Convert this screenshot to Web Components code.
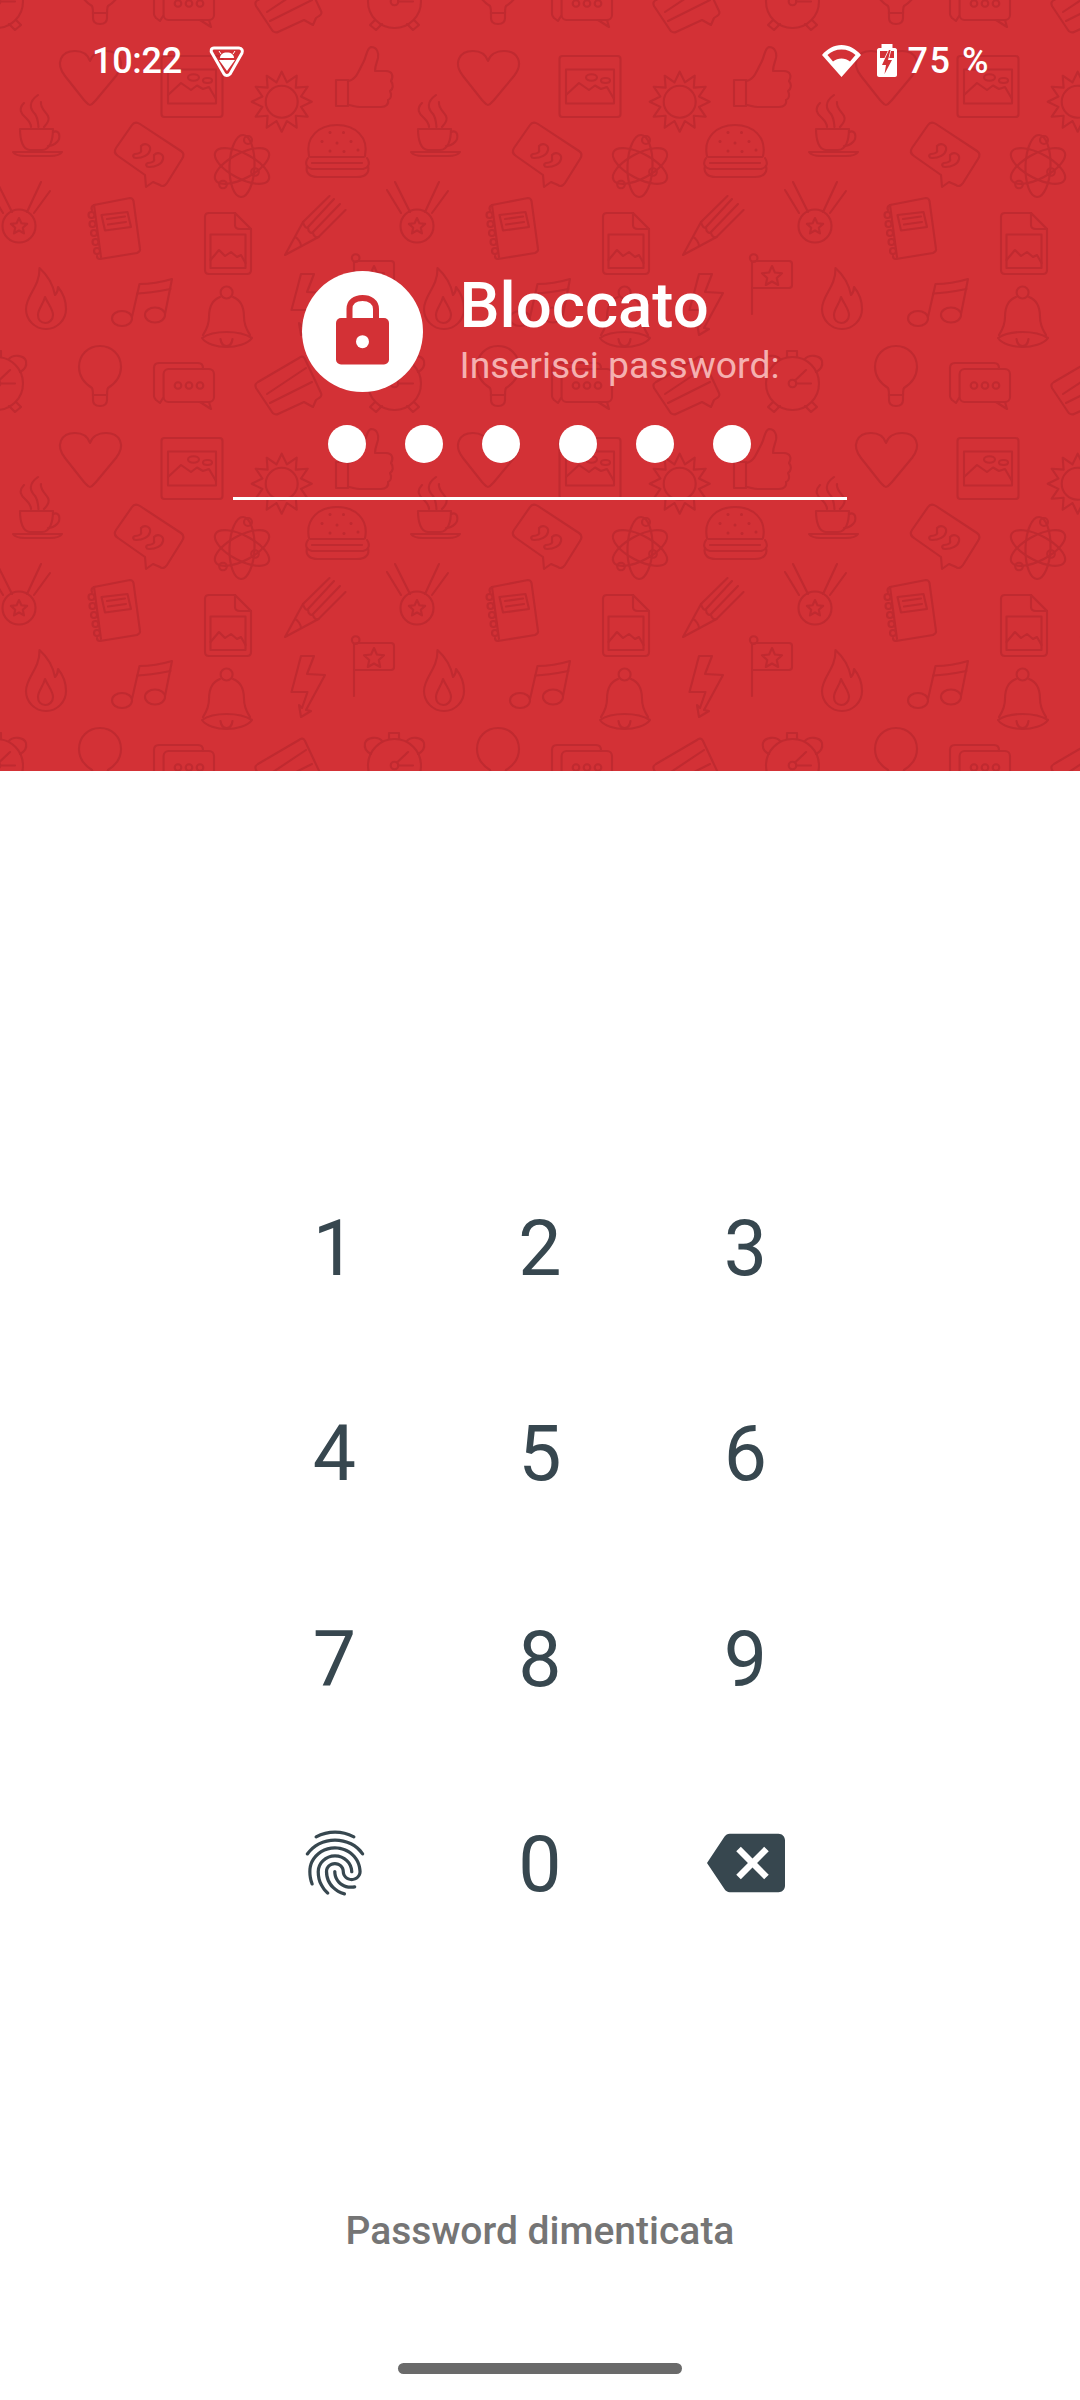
<!DOCTYPE html>
<html lang="it">
<head>
<meta charset="utf-8">
<title>Bloccato</title>
<style>
html, body {
    margin: 0;
    background: white;
}
body {
    width: 1080px;
    height: 2400px;
    overflow: hidden;
    font-family: Roboto, "Noto Sans", sans-serif;
}
</style>
</head>
<body>
<lock-header>
    <span slot="time">10:22</span>
    <span slot="battery">75 %</span>
    <span slot="title">Bloccato</span>
    <span slot="subtitle">Inserisci password:</span>
</lock-header>
<pin-pad>
    <pin-key>1</pin-key><pin-key>2</pin-key><pin-key>3</pin-key>
    <pin-key>4</pin-key><pin-key>5</pin-key><pin-key>6</pin-key>
    <pin-key>7</pin-key><pin-key>8</pin-key><pin-key>9</pin-key>
    <pin-key>
        <svg width="78" height="78" viewBox="0 0 24 24" fill="#37474f"><path d="M17.81 4.47c-.08 0-.16-.02-.23-.06C15.66 3.42 14 3 12.01 3c-1.98 0-3.86.47-5.57 1.41-.24.13-.54.04-.68-.2-.13-.24-.04-.55.2-.68C7.82 2.52 9.86 2 12.01 2c2.13 0 3.99.47 6.03 1.52.25.13.34.43.21.67-.09.18-.26.28-.44.28zM3.5 9.72c-.1 0-.2-.03-.29-.09-.23-.16-.28-.47-.12-.7.99-1.4 2.25-2.5 3.75-3.27C9.98 4.04 14 4.03 17.15 5.65c1.5.77 2.76 1.86 3.75 3.25.16.22.11.54-.12.7-.23.16-.54.11-.7-.12-.9-1.26-2.04-2.25-3.39-2.94-2.87-1.47-6.54-1.47-9.4.01-1.36.7-2.5 1.7-3.4 2.96-.08.14-.23.21-.39.21zm6.25 12.07c-.13 0-.26-.05-.35-.15-.87-.87-1.34-1.43-2.01-2.64-.69-1.23-1.05-2.73-1.05-4.34 0-2.97 2.54-5.39 5.66-5.39s5.66 2.42 5.66 5.39c0 .28-.22.5-.5.5s-.5-.22-.5-.5c0-2.42-2.09-4.39-4.66-4.39-2.57 0-4.66 1.97-4.66 4.39 0 1.44.32 2.77.93 3.85.64 1.15 1.08 1.64 1.85 2.42.19.2.19.51 0 .71-.11.1-.24.15-.37.15zm7.17-1.85c-1.19 0-2.24-.3-3.1-.89-1.49-1.01-2.38-2.65-2.38-4.39 0-.28.22-.5.5-.5s.5.22.5.5c0 1.41.72 2.74 1.94 3.56.71.48 1.54.71 2.54.71.24 0 .64-.03 1.04-.1.27-.05.53.13.58.41.05.27-.13.53-.41.58-.57.11-1.07.12-1.21.12zM14.91 22c-.04 0-.09-.01-.13-.02-1.59-.44-2.63-1.03-3.72-2.1-1.4-1.39-2.17-3.24-2.17-5.22 0-1.62 1.38-2.94 3.08-2.94 1.7 0 3.08 1.32 3.08 2.94 0 1.07.93 1.94 2.08 1.94s2.08-.87 2.08-1.94c0-3.77-3.25-6.83-7.25-6.83-2.84 0-5.44 1.58-6.61 4.03-.39.81-.59 1.76-.59 2.8 0 .78.07 2.01.67 3.61.1.26-.03.55-.29.64-.26.1-.55-.04-.64-.29-.49-1.31-.73-2.61-.73-3.96 0-1.2.23-2.29.68-3.24 1.33-2.79 4.28-4.6 7.51-4.6 4.55 0 8.25 3.51 8.25 7.83 0 1.62-1.38 2.94-3.08 2.94s-3.08-1.32-3.08-2.94c0-1.07-.93-1.94-2.08-1.94s-2.08.87-2.08 1.94c0 1.71.66 3.31 1.87 4.51.95.94 1.86 1.46 3.27 1.85.27.07.42.35.35.61-.05.23-.26.38-.47.38z"/></svg>
    </pin-key>
    <pin-key>0</pin-key>
    <pin-key>
        <svg width="78" height="78" viewBox="0 0 24 24" fill="#37474f"><path d="M22 3H7c-.69 0-1.23.35-1.59.88L0 12l5.41 8.11c.36.53.9.89 1.59.89h15c1.1 0 2-.9 2-2V5c0-1.1-.9-2-2-2zm-3 12.59L17.59 17 14 13.41 10.41 17 9 15.59 12.59 12 9 8.41 10.41 7 14 10.59 17.59 7 19 8.41 15.41 12 19 15.59z"/></svg>
    </pin-key>
</pin-pad>
<forgot-link>Password dimenticata</forgot-link>
<home-pill></home-pill>

<script>
function star(cx, cy, outer, inner, n, start) {
    let pts = []
    for (let i = 0; i < n * 2; i++) {
        let r = i % 2 ? inner : outer
        let a = start + i * Math.PI / n
        pts.push((cx + r * Math.cos(a)).toFixed(1) + ',' + (cy + r * Math.sin(a)).toFixed(1))
    }
    return pts.join(' ')
}

// one tile of the doodle wallpaper, in page pixels
const TILE_W = 398
const TILE_H = 382
const TILE = `
<path d="M90 105C88 105 87 103 84 100L65 76C55 63 61 51 75 51C83 51 88 55 90 61C92 55 98 51 106 51C120 51 126 63 116 76L96 100C93 103 92 105 90 105Z"/>
<rect x="161.500" y="56" width="61" height="61" rx="3"/>
<rect x="168" y="69.500" width="48" height="34"/>
<path d="M168 95L181 83L191 90L197 85.500L203 89L209 87L216 99"/>
<ellipse cx="193.500" cy="77.500" rx="5.500" ry="3.200"/>
<ellipse cx="207.500" cy="80.500" rx="4.500" ry="2.500"/>
<polygon points="${star(281.7, 101.7, 30, 20, 12, -Math.PI / 2)}"/>
<circle cx="281.700" cy="101.700" r="16"/>
<path d="M336 80H348V106H336Z"/>
<path d="M348 81C356 80 358 72 363 63C367 56 366 49 371 47C377 47 379 53 378 58C377 62 375 66 375 71L386 71C392 71 394 76 391 81C394 85 393 89 390 91C392 95 391 99 388 100C389 104 386 107 381 107L360 107C355 107 352 105 348 105"/>
<path d="M13 152H62C60 155 55 156 50 156H25C20 156 15 155 13 152Z"/>
<path d="M20 129H53C53 140 50 150 42 150H30C23 150 20 140 20 129Z"/>
<path d="M53 132C60 129 61 138 57 142C54 145 50 146 48 146"/>
<path d="M24 103C18 109 21 114 26 118C29 121 31 123 31 127"/>
<path d="M38 95C28 102 30 109 35 114C38 118 38 123 38.500 127"/>
<path d="M41 102C40 108 46 112 48 116C50 120 47 124 44 127"/>
<path d="M132 125C134 122 137 122 140 124L181 151C184 153 184 156 182 159L167 183C165 186 162 187 160 185L153 182L146 187L145 175L118 156C115 154 114 151 116 148Z"/>
<path d="M141 146C145 142 151 145 150 150C149 155 143 158 136 158C133 158 132 155 135 154C139 154 142 152 141 150Z"/>
<path d="M154 155C158 151 164 154 163 159C162 164 156 167 149 167C146 167 145 164 148 163C152 163 155 161 154 159Z"/>
<g transform="translate(242 166)">
    <ellipse rx="31" ry="12.500" transform="rotate(92)"/>
    <ellipse rx="30" ry="12.500" transform="rotate(28)"/>
    <ellipse rx="30" ry="12.500" transform="rotate(-28)"/>
</g>
<circle cx="248" cy="140" r="4"/>
<circle cx="255" cy="172" r="3.800"/>
<circle cx="223" cy="184.500" r="3.800"/>
<path d="M309 156C305 137 319 125 337 125C355 125 369 137 365 156C365 157 364 157 362 157H312C310 157 309 157 309 156Z"/>
<path d="M308 158C304 164 307 168 312 169H363C368 168 371 164 367 158"/>
<path d="M307 166C305 173 310 177 318 177H357C365 177 370 173 368 166"/>
<path d="M312 163H362"/>
<g fill="#c02a30" stroke="none">
    <circle cx="330" cy="132.500" r="1.500"/><circle cx="343.500" cy="132.500" r="1.500"/>
    <circle cx="322" cy="141.500" r="1.500"/><circle cx="337" cy="143" r="1.500"/><circle cx="351" cy="141.500" r="1.500"/>
    <circle cx="330" cy="151" r="1.500"/><circle cx="344" cy="151.500" r="1.500"/><circle cx="358" cy="150" r="1.500"/>
</g>
<circle cx="19" cy="226" r="16.500"/>
<polygon points="${star(19, 226.5, 8.5, 4, 5, -Math.PI / 2)}"/>
<path d="M-3 182L12 212M-11 190L3 213M41 182L27 212M50 191L34 213"/>
<path d="M94 205L130 198C132 198 133 199 133.500 201L140 249C140.500 251 139 252 137 253L100 259C98 259 97 258 97 256"/>
<path d="M94 205L101 257M94 205C92 206 91 208 92 210"/>
<circle cx="91.500" cy="215" r="3"/><circle cx="92.500" cy="224" r="3"/><circle cx="94" cy="233" r="3"/><circle cx="95.500" cy="242" r="3"/><circle cx="97" cy="251" r="3"/>
<polygon points="101.500,215 127.500,212 131,227 105,230.500"/>
<path d="M107 219L125 216.500M108 224.500L126 222"/>
<path d="M209 213H235L251 229V270C251 273 249 274 247 274H209C206 274 205 272 205 270V217C205 214 207 213 209 213Z"/>
<path d="M235 213V225C235 228 237 229 240 229H251"/>
<rect x="210.500" y="234.500" width="35" height="33.500"/>
<path d="M210.500 260L219 250L225 256L231 252L237 257L241 255L245.500 263"/>
<path d="M285 255L303 222L329.500 196M285 255L318.500 237L345.500 210"/>
<path d="M303 222C304 226 306 229 308 227L334 199M308 227C308 232 311 234 313 232L340 204M313 232C313 236 316 238 318.500 237"/>
<path d="M295 237C298 238 301 243 301 246"/>
<circle cx="355.700" cy="258" r="3.800"/>
<path d="M354 262V314"/>
<path d="M354 262L358 261H391C393 261 394 262 394 264V285C394 287 393 288 391 288H354"/>
<polygon points="${star(374, 276.5, 10.5, 5, 5, -Math.PI / 2)}"/>
<path d="M301 274H314L307 292L325 293L306 328L311 329L301 335L299 323L302 326L307.500 310H291.500Z"/>
<path d="M39.500 268C44 272 52 280 55 295C57 293 58 291 58 287C63 293 66 301 66 309C66 320 57 329 46 329C35 329 26 320 26 309C26 295 40 287 39.500 268Z"/>
<path d="M45 297C48 304 53 309 53 315C53 320 49 323 45.500 323C41 323 38 320 38 315C38 309 43 305 45 297Z"/>
<ellipse cx="122" cy="318.500" rx="10" ry="7.500"/>
<ellipse cx="155" cy="315" rx="10" ry="7.500"/>
<path d="M132 317L139.500 284C150 284 162 282 172 279L165 314"/>
<path d="M137.500 293.500C150 293 160 291 170.500 289"/>
<circle cx="226.600" cy="292.500" r="6"/>
<path d="M220 297C212 300 209 308 209 317C209 326 206 330 203 335"/>
<path d="M233 297C241 300 244 308 244 317C244 326 247 330 250 335"/>
<path d="M202 338C209 333 218 332 226.600 332C235 332 244 333 252 338C248 344 236 347 226.600 347C217 347 206 344 202 338Z"/>
<path d="M220.500 339C221 343 223 346 226.600 346C230 346 232 343 232.500 339"/>
<path d="M92 388C84 383 79 376 79 367C79 355 88 346 100 346C112 346 121 355 121 367C121 376 116 383 108 388C107 390 107 392 107 396V400C107 404 104 406 100 406C96 406 93 404 93 400V396C93 392 93 390 92 388Z"/>
<path d="M93 395H107"/>
<rect x="163.600" y="369" width="50.400" height="33" rx="5"/>
<path d="M200 402L211 409L209 402"/>
<path d="M203 369V368C203 365 201 363 198 363H159C156 363 154 365 154 368V396C154 398 155 399 156 400L160 403L163 398"/>
<circle cx="178" cy="385.500" r="3.300"/><circle cx="189" cy="385.500" r="3.300"/><circle cx="200" cy="385.500" r="3.300"/>
<path d="M299 358C301 356 304 356 305 359L321 393C322 395 321 397 319 398L316 400L313 407L304 402L278 414C276 415 273 414 272 412L256 388C255 385 255 384 258 382Z"/>
<path d="M267 394L306 368M270 403L312 382"/>
<circle cx="394.500" cy="383.500" r="26.500"/>
<path d="M389 357V351H399V357"/>
<path d="M371 372C367 370 364 366 365 361C367 355 378 354 382 359"/>
<path d="M418 372C422 370 425 366 424 361C422 355 411 354 407 359"/>
<path d="M375 402L370 407L376 412L382 406M414 402L419 407L413 412L407 406"/>
<circle cx="394.500" cy="383.500" r="3.800"/>
<path d="M397 380.500L408 370M398.500 383.500H413"/>
`

class PatternBg extends HTMLElement {
    constructor() {
        super()
        this._shadowRoot = this.attachShadow({mode: 'open'})
        let uses = ''
        for (let i = -1; i < 4; i++) {
            for (let j = -1; j < 3; j++) {
                uses += `<use href="#tile" x="${i * TILE_W}" y="${j * TILE_H}"/>`
            }
        }
        this._shadowRoot.innerHTML = `
<style>
:host {
    position: absolute;
    inset: 0;
    display: block;
    overflow: hidden;
}
svg {
    display: block;
}
</style>
<svg width="1080" height="771" viewBox="0 0 1080 771" fill="none" stroke="#c02a30" stroke-width="2.1" stroke-linejoin="round" stroke-linecap="round">
    <defs><g id="tile">${TILE}</g></defs>
    ${uses}
</svg>
`
    }
}

class StatusBar extends HTMLElement {
    constructor() {
        super()
        this._shadowRoot = this.attachShadow({mode: 'open'})
        this._shadowRoot.innerHTML = `
<style>
:host {
    display: flex;
    justify-content: space-between;
    align-items: center;
    height: 122px;
    padding: 0 90px 0 92px;
    color: white;
    font: 500 36px/1 Roboto, sans-serif;
    letter-spacing: -.3px;
}
.group {
    display: flex;
    align-items: center;
}
svg {
    display: block;
}
#shield {
    margin-left: 27px;
}
#battery {
    margin: 0 11px 0 16px;
}
#level {
    letter-spacing: 1.500px;
}
</style>
<div class="group">
    <slot name="time"></slot>
    <svg id="shield" width="36" height="34" viewBox="210 46 36 34">
        <path d="M215 50H240C243 50 244 53 243 55L231 76C229 78 226.500 78 225 76L213 55C211.500 53 212 50 215 50Z" fill="none" stroke="white" stroke-width="3"/>
        <path d="M221 60C221 56.500 224 54.500 228 54.500C232 54.500 235 56.500 235 60Z" fill="white"/>
        <path d="M222 56L220 53M234 56L236 53" stroke="white" stroke-width="1"/>
        <path d="M220 62H236L228 73Z" fill="white"/>
    </svg>
</div>
<div class="group">
    <svg width="40" height="34" viewBox="820 45 40 34">
        <path fill="white" fill-rule="evenodd" d="M821 56C826 50 833 46 840.500 46C848 46 855 50 860 56L840.500 78ZM826.500 56L832 62.500C834.500 60.500 837.500 59.500 840.500 59.500C843.500 59.500 846.500 60.500 849 62.500L854.500 56C851 52.500 846 50.500 840.500 50.500C835 50.500 830 52.500 826.500 56Z"/>
    </svg>
    <svg id="battery" width="20" height="34" viewBox="876.500 44 20 34">
        <path fill="white" d="M881 44H892V48H894.500C895.500 48 896.500 49 896.500 50V75C896.500 76 895.500 77 894.500 77H878.500C877.500 77 876.500 76 876.500 75V50C876.500 49 877.500 48 878.500 48H881Z"/>
        <rect x="879.500" y="51" width="14" height="7" fill="#d33136"/>
        <path d="M888.500 50L881.500 65H885.500L884 74L891.500 60H887.500L890 50Z" fill="#d33136" stroke="white" stroke-width="1.500" paint-order="stroke"/>
    </svg>
    <span id="level"><slot name="battery"></slot></span>
</div>
`
    }
}

class PinDots extends HTMLElement {
    constructor() {
        super()
        this._shadowRoot = this.attachShadow({mode: 'open'})
        this._shadowRoot.innerHTML = `
<style>
:host {
    display: flex;
    flex-direction: column;
    align-items: center;
    padding-right: 1px;
}
#dots {
    display: flex;
    gap: 39px;
}
#dots div {
    width: 38px;
    height: 38px;
    border-radius: 50%;
    background: white;
}
#line {
    width: 614px;
    height: 3px;
    margin-top: 34px;
    background: white;
}
</style>
<div id="dots"><div></div><div></div><div></div><div></div><div></div><div></div></div>
<div id="line"></div>
`
    }
}

class LockHeader extends HTMLElement {
    constructor() {
        super()
        this._shadowRoot = this.attachShadow({mode: 'open'})
        this._shadowRoot.innerHTML = `
<style>
:host {
    display: block;
    position: relative;
    height: 771px;
    background: #d33136;
    color: white;
    overflow: hidden;
}
#content {
    position: relative;
    display: flex;
    flex-direction: column;
}
#row {
    display: flex;
    align-items: center;
    gap: 37px;
    margin-top: 149px;
    padding-left: 301.500px;
    height: 121px;
}
#badge {
    width: 121px;
    height: 121px;
    border-radius: 50%;
    background: white;
    flex: none;
}
#badge svg {
    display: block;
}
#text {
    display: flex;
    flex-direction: column;
}
#title {
    font: 500 63.500px/60px Roboto, sans-serif;
}
#subtitle {
    margin-top: 6.600px;
    font: 400 37.300px/44px Roboto, sans-serif;
    color: #f5b0b0;
}
pin-dots {
    margin-top: 33px;
}
</style>
<pattern-bg></pattern-bg>
<div id="content">
    <status-bar>
        <slot name="time" slot="time"></slot>
        <slot name="battery" slot="battery"></slot>
    </status-bar>
    <div id="row">
        <div id="badge">
            <svg width="121" height="121" viewBox="302 271 121 121">
                <path fill="none" stroke="#d33136" stroke-width="6" d="M349.500 320V309C349.500 302 355 298 362.500 298C370 298 376 302 376 309V320"/>
                <rect x="336" y="318" width="53" height="46.500" rx="5" fill="#d33136"/>
                <circle cx="362.500" cy="341.700" r="6.500" fill="white"/>
            </svg>
        </div>
        <div id="text">
            <div id="title"><slot name="title"></slot></div>
            <div id="subtitle"><slot name="subtitle"></slot></div>
        </div>
    </div>
    <pin-dots></pin-dots>
</div>
`
    }
}

class PinPad extends HTMLElement {
    constructor() {
        super()
        this._shadowRoot = this.attachShadow({mode: 'open'})
        this._shadowRoot.innerHTML = `
<style>
:host {
    display: grid;
    grid-template-columns: repeat(3, 205.500px);
    grid-auto-rows: 205.500px;
    justify-content: center;
    margin-top: 374px;
}
</style>
<slot></slot>
`
    }
}

class PinKey extends HTMLElement {
    constructor() {
        super()
        this._shadowRoot = this.attachShadow({mode: 'open'})
        this._shadowRoot.innerHTML = `
<style>
:host {
    display: flex;
    align-items: center;
    justify-content: center;
    padding-top: 2.500px;
    color: #37474f;
    font: 400 77px/1 Roboto, sans-serif;
}
::slotted(svg) {
    margin-bottom: 6px;
}
</style>
<slot></slot>
`
    }
}

class ForgotLink extends HTMLElement {
    constructor() {
        super()
        this._shadowRoot = this.attachShadow({mode: 'open'})
        this._shadowRoot.innerHTML = `
<style>
:host {
    display: block;
    margin-top: 234px;
    text-align: center;
    color: #757575;
    font: 500 39px/60px Roboto, sans-serif;
}
</style>
<slot></slot>
`
    }
}

class HomePill extends HTMLElement {
    constructor() {
        super()
        this._shadowRoot = this.attachShadow({mode: 'open'})
        this._shadowRoot.innerHTML = `
<style>
:host {
    display: block;
    width: 284px;
    height: 10.500px;
    margin: 102px auto 0;
    border-radius: 6px;
    background: #6a6a6a;
}
</style>
`
    }
}

window.customElements.define('pattern-bg', PatternBg)
window.customElements.define('status-bar', StatusBar)
window.customElements.define('pin-dots', PinDots)
window.customElements.define('lock-header', LockHeader)
window.customElements.define('pin-pad', PinPad)
window.customElements.define('pin-key', PinKey)
window.customElements.define('forgot-link', ForgotLink)
window.customElements.define('home-pill', HomePill)
</script>
</body>
</html>
